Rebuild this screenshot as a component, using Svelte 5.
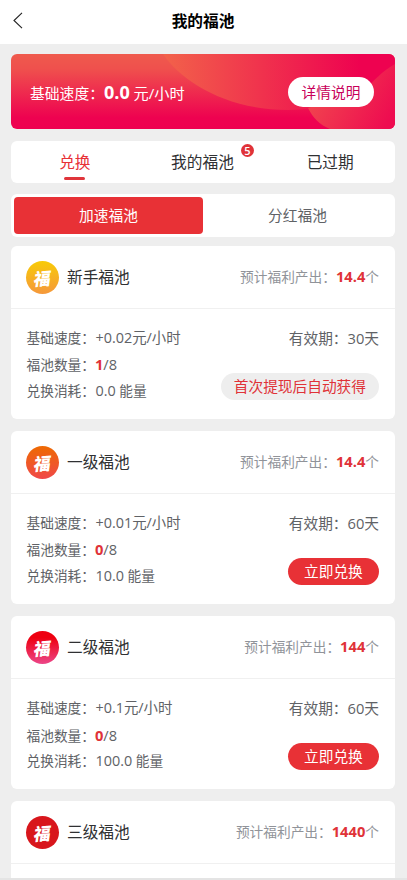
<script lang="ts">
  type Details = {
    speed: string;
    owned: number;
    limit: number;
    cost: string;
    days: number;
    auto?: boolean;
  };

  type Pool = {
    name: string;
    tone: string;
    output: string;
    details?: Details;
  };

  const pools: Pool[] = [
    { name: '新手福池', tone: 'gold', output: '14.4', details: { speed: '+0.02', owned: 1, limit: 8, cost: '0.0', days: 30, auto: true } },
    { name: '一级福池', tone: 'orange', output: '14.4', details: { speed: '+0.01', owned: 0, limit: 8, cost: '10.0', days: 60 } },
    { name: '二级福池', tone: 'pink', output: '144', details: { speed: '+0.1', owned: 0, limit: 8, cost: '100.0', days: 60 } },
    { name: '三级福池', tone: 'red', output: '1440' }
  ];

  const tabs = [
    { label: '兑换', count: 0 },
    { label: '我的福池', count: 5 },
    { label: '已过期', count: 0 }
  ];
  const kinds = ['加速福池', '分红福池'];

  let activeTab = $state(0);
  let activeKind = $state(0);
</script>

<div class="page">
  <header class="navbar">
    <button class="back" aria-label="返回">
      <svg width="10" height="17" viewBox="0 0 10 17">
        <path d="M9 0.8 L1 8.5 L9 16.2" fill="none" stroke="#222" stroke-width="1.1" />
      </svg>
    </button>
    <h1>我的福池</h1>
  </header>

  <main>
    <section class="banner">
      <svg class="banner-bg" viewBox="0 0 384 75" preserveAspectRatio="none" aria-hidden="true">
        <defs>
          <linearGradient id="base" x1="0" y1="0" x2="0" y2="1">
            <stop offset="0" stop-color="#ef5a4d" />
            <stop offset="0.2" stop-color="#ef504d" />
            <stop offset="0.85" stop-color="#ee0250" />
            <stop offset="1" stop-color="#ee0050" />
          </linearGradient>
          <linearGradient id="arc" x1="0" y1="0" x2="1" y2="0">
            <stop offset="0" stop-color="#f2624a" />
            <stop offset="0.85" stop-color="#ee0250" />
          </linearGradient>
          <linearGradient id="corner" x1="0" y1="0.3" x2="1" y2="0.7">
            <stop offset="0" stop-color="#f14a4e" />
            <stop offset="1" stop-color="#ee0c50" />
          </linearGradient>
        </defs>
        <rect width="384" height="75" fill="url(#base)" />
        <path d="M152 0 C170 27 215 56 277 56 C316 56 352 42 384 20 V0 Z" fill="url(#arc)" />
        <path d="M384 10 C370 18 364 26 354 35 L297 54 C302 64 309 71 319 75 L384 75 Z" fill="url(#corner)" />
      </svg>
      <p class="speed">基础速度：<b>0.0</b> <span class="unit">元/小时</span></p>
      <button class="detail">详情说明</button>
    </section>

    <nav class="tabs">
      {#each tabs as tab, i}
        <button class="tab" class:active={i === activeTab} onclick={() => (activeTab = i)}>
          <span class="tab-label">
            {tab.label}
            {#if tab.count}<i class="badge">{tab.count}</i>{/if}
          </span>
        </button>
      {/each}
    </nav>

    <div class="kinds">
      {#each kinds as kind, i}
        <button class="kind" class:active={i === activeKind} onclick={() => (activeKind = i)}>{kind}</button>
      {/each}
    </div>

    {#each pools as pool}
      <article class="card">
        <div class="card-head">
          <span class="icon {pool.tone}"><span class="fu">福</span></span>
          <h2>{pool.name}</h2>
          <p class="output">预计福利产出：<b>{pool.output}</b>个</p>
        </div>
        {#if pool.details}
          <div class="card-body">
            <div class="info">
              <p>基础速度：<span class="num">{pool.details.speed}元/小时</span></p>
              <p>福池数量：<b>{pool.details.owned}</b><span class="limit">/{pool.details.limit}</span></p>
              <p>兑换消耗：<span class="num">{pool.details.cost}</span> 能量</p>
            </div>
            <div class="side">
              <p>有效期：{pool.details.days}天</p>
              {#if pool.details.auto}
                <span class="pill auto">首次提现后自动获得</span>
              {:else}
                <button class="pill">立即兑换</button>
              {/if}
            </div>
          </div>
        {/if}
      </article>
    {/each}
  </main>
</div>

<style>
  :global(body) {
    background: #eeeeee;
  }

  .page {
    height: 880px;
    box-sizing: border-box;
    border-bottom: 2px solid #e4e4e4;
    overflow: hidden;
    background: #eeeeee;
    color: #303133;
    font-family: 'Open Sans', 'Noto Sans CJK SC', sans-serif;
  }

  button {
    border: none;
    background: none;
    padding: 0;
    font-family: inherit;
    color: inherit;
    cursor: pointer;
  }

  h1,
  h2,
  p {
    margin: 0;
    font-weight: normal;
  }

  .navbar {
    display: grid;
    grid-template-columns: 60px 1fr 60px;
    align-items: center;
    height: 44px;
    background: #fff;
  }

  .back {
    display: flex;
    padding: 0 0 4px 13px;
  }

  h1 {
    font-size: 15.7px;
    font-weight: bold;
    line-height: 22px;
    text-align: center;
    color: #000;
    margin: 0 1px 2px 0;
  }

  main {
    display: flex;
    flex-direction: column;
    padding: 10px 12px 0 11px;
  }

  .banner {
    position: relative;
    display: flex;
    flex: none;
    justify-content: space-between;
    align-items: center;
    height: 75px;
    padding: 1px 21px 0 19px;
    box-sizing: border-box;
    border-radius: 6px;
    overflow: hidden;
  }

  .banner-bg {
    position: absolute;
    inset: 0;
    width: 100%;
    height: 100%;
  }

  .speed {
    position: relative;
    font-size: 14.8px;
    color: #fff;
    line-height: 24px;
  }

  .speed b {
    font-size: 18px;
  }

  .unit {
    font-size: 15.2px;
  }

  .detail {
    position: relative;
    width: 86px;
    height: 30px;
    border-radius: 15px;
    background: #fff;
    color: #c8005a;
    font-size: 14.7px;
    line-height: 30px;
  }

  .tabs {
    display: grid;
    grid-template-columns: repeat(3, 1fr);
    flex: none;
    height: 42px;
    box-sizing: border-box;
    margin-top: 12px;
    padding-right: 1px;
    border-radius: 6px;
    background: #fff;
  }

  .tab {
    display: flex;
    flex-direction: column;
    align-items: center;
    padding-top: 10px;
    font-size: 15.7px;
    line-height: 22px;
  }

  .tab-label {
    position: relative;
  }

  .tab.active {
    color: #e83136;
  }

  .tab.active::after {
    content: '';
    width: 21px;
    height: 3px;
    margin-top: 4px;
    border-radius: 2px;
    background: #e0353b;
  }

  .badge {
    position: absolute;
    top: -7px;
    right: -20px;
    width: 13px;
    height: 13px;
    border-radius: 50%;
    background: #e03238;
    color: #fff;
    font-size: 11px;
    font-style: normal;
    font-weight: 600;
    line-height: 13px;
    text-align: center;
  }

  .kinds {
    display: grid;
    grid-template-columns: 1fr 1fr;
    flex: none;
    height: 43px;
    box-sizing: border-box;
    margin-top: 11px;
    padding: 3px;
    border-radius: 6px;
    background: #fff;
  }

  .kind {
    border-radius: 4px;
    color: #606266;
    font-size: 14.7px;
    line-height: 37px;
  }

  .kind.active {
    background: #e83136;
    color: #fff;
  }

  .card {
    flex: none;
    height: 172.6px;
    margin-bottom: 12.5px;
    border-radius: 6px;
    background: #fff;
  }

  .kinds + .card {
    margin-top: 9px;
  }

  .card-head {
    display: flex;
    align-items: center;
    height: 63px;
    box-sizing: border-box;
    padding: 0 16px 0 15px;
    border-bottom: 1px solid #f0f0f0;
  }

  .icon {
    display: flex;
    align-items: center;
    justify-content: center;
    width: 33px;
    height: 33px;
    border-radius: 50%;
    color: #fff;
  }

  .fu {
    font-family: 'Noto Sans CJK SC', sans-serif;
    font-size: 17px;
    font-weight: 900;
    line-height: 17px;
    transform: rotate(-4deg) skewX(-12deg);
  }

  .gold {
    background: linear-gradient(#f8cb06, #f5983c);
  }

  .orange {
    background: linear-gradient(#ee6a02, #f04848);
  }

  .pink {
    background: linear-gradient(#ee0010 20%, #ec4688);
  }

  .red {
    background: #d8161c;
  }

  h2 {
    margin-left: 8px;
    font-size: 15.7px;
    line-height: 22px;
  }

  .output {
    margin: 0 0 2px auto;
    font-size: 13.7px;
    color: #909399;
  }

  .output b,
  .info b {
    font-size: 14.7px;
    color: #e03238;
  }

  .card-body {
    display: flex;
    justify-content: space-between;
    padding: 16px 16px 0 15px;
    color: #606266;
  }

  .info {
    padding-left: 0.5px;
    font-size: 13.7px;
  }

  .info p {
    height: 26.4px;
    line-height: 26px;
  }

  .num {
    margin-left: 0.5px;
    font-size: 14.4px;
  }

  .limit {
    font-size: 14.6px;
  }

  .side {
    display: flex;
    flex-direction: column;
    align-items: flex-end;
    font-size: 14.7px;
    line-height: 27px;
  }

  .pill {
    margin-top: 21px;
    padding: 0 16.2px;
    height: 27px;
    border-radius: 14px;
    background: #e83136;
    color: #fff;
    font-size: 14.7px;
    line-height: 27px;
  }

  .pill.auto {
    padding: 0 13px;
    background: #eeeeee;
    color: #e03238;
  }
</style>
